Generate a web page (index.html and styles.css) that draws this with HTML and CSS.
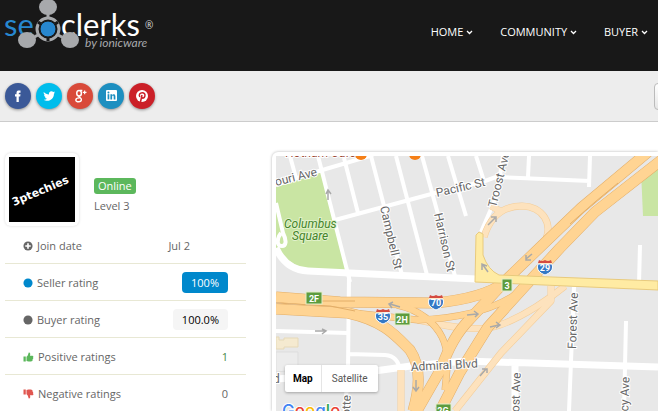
FILE: index.html
```html
<!DOCTYPE html>
<html lang="en">
<head>
  <meta charset="UTF-8" />
  <meta name="viewport" content="width=device-width, initial-scale=1.0"/>
  <title>3ptechies - SEOClerks</title>
  <link rel="stylesheet" href="styles.css">
</head>
<body>

  <!-- Header -->
  <header>
    <a class="logo" href="#" aria-label="SEOClerks by ionicware">
      <svg width="156" height="52" viewBox="0 0 156 52">
        <g class="logo-word">
          <text class="logo-blue" x="4" y="36">se</text>
          <text x="61" y="36">clerks</text>
        </g>
        <text class="logo-reg" x="145" y="29">®</text>
        <text class="logo-by" x="85" y="47">by ionicware</text>
        <circle cx="48" cy="29" r="13" fill="#181818"/>
        <g stroke="#a7a9ac" stroke-width="3" fill="none">
          <circle cx="48" cy="29" r="11"/>
          <path d="M48 8V19M38 35L27 41M58 35L70 41"/>
        </g>
        <g stroke="#181818" stroke-width="3"><path d="M48 29L38 22M48 29L58 22M48 29V41"/></g>
        <g fill="#a7a9ac">
          <ellipse cx="48" cy="7" rx="9" ry="8"/>
          <ellipse cx="27" cy="40" rx="9" ry="8"/>
          <ellipse cx="70" cy="40" rx="9" ry="8"/>
        </g>
        <circle cx="48" cy="29" r="8" fill="#2787cf" stroke="#181818"/>
      </svg>
    </a>
    <nav>
      <a href="#">HOME <svg class="chevron" viewBox="0 0 7 5"><path d="M1 1L3.500 3.500L6 1"/></svg></a>
      <a href="#">COMMUNITY <svg class="chevron" viewBox="0 0 7 5"><path d="M1 1L3.500 3.500L6 1"/></svg></a>
      <a href="#">BUYER <svg class="chevron" viewBox="0 0 7 5"><path d="M1 1L3.500 3.500L6 1"/></svg></a>
    </nav>
  </header>

  <!-- Social bar -->
  <div class="social-bar">
    <a class="social facebook" href="#" aria-label="Facebook">
      <svg viewBox="0 0 26 26"><path d="M11.500 19V13.500H10V11.300H11.500V10C11.500 8 12.500 7.500 14 7.500H15.500V9.700H14.500C13.900 9.700 13.800 10 13.800 10.500V11.300H15.500L15.200 13.500H13.800V19Z"/></svg>
    </a>
    <a class="social twitter" href="#" aria-label="Twitter">
      <svg viewBox="-2 -2 30 30"><path d="M7 8.500C8.500 10.300 10.500 11.300 13 11.400C12.500 9 14 7.500 15.800 7.500C16.700 7.500 17.400 7.900 17.900 8.400L19.700 7.800L18.700 9.300L20 9L18.700 10.400C18.800 15 15.300 18.500 11.200 18.500C9.500 18.500 8 18 7 17.300C8.500 17.400 9.800 17 10.700 16.200C9.400 16 8.600 15.400 8.300 14.400H9.400C8 13.900 7.300 13 7.300 11.700L8.300 12C7 11 6.600 9.800 7 8.500Z"/></svg>
    </a>
    <a class="social google" href="#" aria-label="Google Plus">
      <svg viewBox="-1 -1 28 28"><g fill="none" stroke="#fff"><ellipse cx="12" cy="10" rx="2.500" ry="3" stroke-width="1.600"/><path d="M13 7H15.500M11.500 13C12 15 14.500 14.700 14.500 16.800C14.500 20 8.500 20 8.500 17.200C8.500 15.300 11 15 12.500 15" stroke-width="1.500"/><path d="M18 7V11M16 9H20" stroke-width="1.300"/></g></svg>
    </a>
    <a class="social linkedin" href="#" aria-label="LinkedIn">
      <svg viewBox="0 0 26 26"><rect x="8" y="7" width="11" height="11" rx="1"/><g fill="#1d8fc0"><rect x="9.600" y="11.200" width="1.700" height="5.200"/><circle cx="10.450" cy="9.500" r="1"/><path d="M12.400 11.200H14V12C15 10.600 17.400 10.800 17.400 13.200V16.400H15.700V13.600C15.700 12.200 14.100 12.200 14.100 13.600V16.400H12.400Z"/></g></svg>
    </a>
    <a class="social pinterest" href="#" aria-label="Pinterest">
      <svg viewBox="0 0 26 26"><circle cx="13" cy="13" r="6"/><path d="M11.500 19L13 12M10.800 14C9.500 11.500 11 9.700 13.200 9.700C15.400 9.700 16.300 11.200 15.900 13C15.400 15.300 13.300 15.700 12.700 14.300" fill="none" stroke="#cb2028" stroke-width="1.500"/></svg>
    </a>
    <button class="bar-button" type="button" aria-label="Search"></button>
  </div>

  <!-- Profile -->
  <main>
    <section class="profile">
      <div class="user">
        <div class="avatar">
          <svg width="66" height="65" viewBox="0 0 66 65"><rect width="66" height="65"/><text class="avatar-name" x="5" y="49" transform="rotate(-23 5 49)">3ptechies</text></svg>
        </div>
        <div class="status">
          <span class="online">Online</span>
          <span>Level 3</span>
        </div>
      </div>

      <table class="stats">
        <tr>
          <th scope="row"><svg class="icon" viewBox="0 0 11 11"><circle cx="5.500" cy="5.500" r="5" fill="#666"/><path d="M5.500 2.500V8.500M2.500 5.500H8.500" stroke="#fff" stroke-width="1.800"/></svg>Join date</th>
          <td class="date">Jul 2</td>
        </tr>
        <tr>
          <th scope="row"><svg class="icon" viewBox="0 0 11 11"><circle cx="5.500" cy="5.500" r="5" fill="#08c"/></svg>Seller rating</th>
          <td><span class="badge seller">100%</span></td>
        </tr>
        <tr>
          <th scope="row"><svg class="icon" viewBox="0 0 11 11"><circle cx="5.500" cy="5.500" r="5" fill="#666"/></svg>Buyer rating</th>
          <td><span class="badge buyer">100.0%</span></td>
        </tr>
        <tr>
          <th scope="row"><svg class="icon thumb" viewBox="0 0 11 11"><path d="M0 5H2.500V10.500H0ZM3.300 5.200C5 4.200 5 2.500 5.800 0.500C7.500 0.300 7.800 2 7.100 4H10C11.200 4.400 11 5.500 10.500 6C11 7 10.600 7.700 10 8C10.300 9.500 9.500 10.500 8 10.500H5.500L3.300 10Z" fill="#5bb75b"/></svg>Positive ratings</th>
          <td class="positive">1</td>
        </tr>
        <tr>
          <th scope="row"><svg class="icon thumb" viewBox="0 0 11 11"><path transform="matrix(1 0 0 -1 0 11)" d="M0 5H2.500V10.500H0ZM3.300 5.200C5 4.200 5 2.500 5.800 0.500C7.500 0.300 7.800 2 7.100 4H10C11.200 4.400 11 5.500 10.500 6C11 7 10.600 7.700 10 8C10.300 9.500 9.500 10.500 8 10.500H5.500L3.300 10Z" fill="#e05650"/></svg>Negative ratings</th>
          <td>0</td>
        </tr>
      </table>
    </section>

    <!-- Map -->
    <section class="map">
      <svg class="map-canvas" viewBox="276 156 382 255" preserveAspectRatio="xMinYMin slice">
        <rect class="land" x="276" y="156" width="382" height="255"/>
        <path class="park" d="M276 187L321 172L347 271L306 271L286 259L276 248Z"/>
        <path class="park" d="M641 171L662 156V216H643Z"/>
        <path d="M276 337H279V340H284V338H298V347H284V349H276Z" fill="#f5ead0" stroke="#e6d9b8"/>
        <path d="M276 352L298 352V370L276 372Z" fill="#ececec" stroke="#ddd"/>

        <!-- streets -->
        <g class="street">
          <path d="M276 185L319 171L373 155M290 156L296 178M318 156L350 282M344 158L358 213"/>
          <path d="M371 156L402 275M396 156L427 275M422 156L455 276M448 156L466 216"/>
          <path d="M335 220L435 193L485 181L496 177L590 181M476 156L484 181M529 156L528 177M590 156L589 187"/>
          <path d="M276 203L283 233C287 241 286 246 282 246C276 246 277 238 281 233"/>
          <path d="M349 275L348 370L345 411M276 331L348 333M348 354L385 355Q399 356 400 372"/>
          <path d="M574 287L569 411M626 321L624 411M640 245L639 284"/>
          <path d="M503 156L497 195L481 232"/>
        </g>
        <g class="avenue">
          <path d="M276 248Q286 270 308 271L476 279"/>
          <path d="M276 379L360 373L411 366L465 361L658 367M515 365V411"/>
        </g>

        <!-- ramps -->
        <g class="ramp-edge">
          <path d="M484 237C492 210 510 206 522 206C544 207 552 224 546 239C542 252 522 263 508 278M491 206L502 212"/>
          <path d="M418 320C455 328 480 332 500 325C525 316 545 302 565 286"/>
          <path d="M455 411L501 353L551 301V286M401 370V411"/>
        </g>
        <g class="ramp">
          <path d="M484 237C492 210 510 206 522 206C544 207 552 224 546 239C542 252 522 263 508 278M491 206L502 212"/>
          <path d="M418 320C455 328 480 332 500 325C525 316 545 302 565 286"/>
          <path d="M455 411L501 353L551 301V286M401 370V411"/>
        </g>

        <!-- highways -->
        <g class="highway-edge">
          <path d="M648 152L581 208L508 278L470 319Q452 337 441 369L414 416"/>
          <path d="M664 158L595 212L560 248L526 285L488 327L460 372L440 411"/>
          <path d="M276 297L340 302L435 303C465 300 490 294 505 282"/>
          <path d="M276 309L348 313C385 321 397 337 410 350C422 368 419 390 413 411"/>
        </g>
        <g class="link-edge">
          <path d="M354 313L418 320C470 318 505 306 528 285"/>
          <path d="M397 305C420 310 435 323 442 337C450 353 447 369 445 390"/>
        </g>
        <g class="highway">
          <path d="M648 152L581 208L508 278L470 319Q452 337 441 369L414 416"/>
          <path d="M664 158L595 212L560 248L526 285L488 327L460 372L440 411"/>
          <path d="M276 297L340 302L435 303C465 300 490 294 505 282"/>
          <path d="M276 309L348 313C385 321 397 337 410 350C422 368 419 390 413 411"/>
        </g>
        <g class="link">
          <path d="M354 313L418 320C470 318 505 306 528 285"/>
          <path d="M397 305C420 310 435 323 442 337C450 353 447 369 445 390"/>
        </g>
        <path class="lane" d="M316 301L355 301M618 183L595 202L570 224M276 303L330 306L355 311"/>

        <!-- main road -->
        <path class="main-road" d="M476 235L479 232L483 234V255Q488 270 499 275L658 281V290L475 282Z"/>

        <!-- direction arrows -->
        <g class="arrow">
          <path d="M328 200V191M326 194L328 190L331 194"/>
          <path d="M488 225L495 218M491 217L496 217L496 222"/>
          <path d="M532 254L526 259M526 255V260H531"/>
          <path d="M488 272L483 265M482 270V264L487 266"/>
          <path d="M315 331H325M322 329L326 331L322 334"/>
          <path d="M400 307L390 304M393 302L389 304L392 308"/>
          <path d="M416 380V390M413 387L416 391L419 387"/>
          <path d="M467 315L477 314M474 311L478 314L475 317"/>
          <path d="M490 327L499 325M496 322L500 325L496 328"/>
          <path d="M480 376L486 369M482 369H487V373"/>
        </g>

        <!-- street names -->
        <g class="label">
          <text x="276" y="186" transform="rotate(-14 276 186)">ouri Ave</text>
          <text x="437" y="197" transform="rotate(-13 437 197)">Pacific St</text>
          <text x="380" y="207" transform="rotate(77 380 207)">Campbell St</text>
          <text x="434" y="214" transform="rotate(77 434 214)">Harrison St</text>
          <text x="496" y="208" transform="rotate(-76 496 208)">Troost Ave</text>
          <text x="411" y="371" transform="rotate(-3 411 371)">Admiral Blvd</text>
          <text x="576" y="349" transform="rotate(-88 576 349)">Forest Ave</text>
          <text x="519" y="419" transform="rotate(-88 519 419)">oost Ave</text>
          <text x="628" y="418" transform="rotate(-88 628 418)">acy Ave</text>
          <text x="350" y="419" transform="rotate(-88 350 419)">lotte St</text>
          <text x="273" y="383">d</text>
        </g>
        <g class="label park-label">
          <text x="284" y="228">Columbus</text>
          <text x="292" y="240">Square</text>
        </g>
        <text class="label food" x="285" y="157">Hotham Café</text>
        <circle cx="361" cy="154" r="6" fill="#f57f17"/>
        <circle cx="415" cy="154" r="6" fill="#f57f17"/>

        <!-- exit signs -->
        <g class="exit">
          <rect x="306" y="292" width="16" height="12"/><text x="314" y="302">2F</text>
          <rect x="395" y="313" width="15" height="12"/><text x="402" y="323">2H</text>
          <rect x="502" y="279" width="10" height="12"/><text x="507" y="289">3</text>
          <rect x="436" y="404" width="15" height="12"/><text x="443" y="414">2G</text>
        </g>

        <!-- interstate shields -->
        <defs>
          <g id="shield">
            <path d="M-7 -3H7C9 3 5 6 0 8C-5 6 -9 3 -7 -3Z" fill="#3478c5" stroke="#fff" stroke-width="1"/>
            <path d="M-6 -7Q-3 -5 0 -7Q3 -5 6 -7L7 -4H-7Z" fill="#d44b40"/>
          </g>
        </defs>
        <g class="shield">
          <use href="#shield" x="545" y="267"/><text x="545" y="271">29</text>
          <use href="#shield" x="436" y="302"/><text x="436" y="306">70</text>
          <use href="#shield" x="383" y="316"/><text x="383" y="320">35</text>
        </g>

        <text class="google-mark" x="282" y="417"><tspan fill="#4285f4">G</tspan><tspan fill="#ea4335">o</tspan><tspan fill="#fbbc05">o</tspan><tspan fill="#4285f4">g</tspan><tspan fill="#34a853">l</tspan><tspan fill="#ea4335">e</tspan></text>
      </svg>

      <div class="map-type">
        <button class="active" type="button">Map</button>
        <button type="button">Satellite</button>
      </div>
    </section>
  </main>

</body>
</html>
```

FILE: styles.css
```css
* {
  box-sizing: border-box;
}

body {
  margin: 0;
  height: 100vh;
  display: flex;
  flex-direction: column;
  overflow: hidden;
  font-family: "Open Sans", sans-serif;
  font-size: 11px;
  background-color: #fff;
  color: #666;
}

/* Header */
header {
  flex: none;
  height: 71px;
  display: flex;
  justify-content: space-between;
  background-color: #181818;
}

.logo svg {
  display: block;
}

.logo-word {
  font-family: Lato, sans-serif;
  font-size: 31px;
  fill: #fff;
}

.logo-word .logo-blue {
  fill: #2787cf;
}

.logo-reg {
  font-size: 10px;
  fill: #ddd;
}

.logo-by {
  font-family: Lato, sans-serif;
  font-size: 12px;
  font-style: italic;
  fill: #a7a9ac;
}

nav {
  display: flex;
  gap: 27px;
  padding: 23px 10px 0 0;
}

nav a {
  color: #fff;
  line-height: 18px;
  text-decoration: none;
  white-space: nowrap;
}

.chevron {
  width: 7px;
  height: 5px;
  margin-bottom: 1px;
  fill: none;
  stroke: #fff;
  stroke-width: 1.3;
}

/* Social bar */
.social-bar {
  flex: none;
  height: 51px;
  display: flex;
  align-items: center;
  gap: 5px;
  padding-left: 5px;
  background-color: #ededed;
  border-bottom: 1px solid #ccc;
}

.social {
  width: 26px;
  height: 26px;
  border-radius: 50%;
  box-shadow: 0 1px 3px rgba(0,0,0,0.4);
}

.social svg {
  display: block;
  fill: #fff;
}

.facebook {
  background-color: #3b5998;
}

.twitter {
  background-color: #00bdec;
}

.google {
  background-color: #d94a3a;
}

.linkedin {
  background-color: #1d8fc0;
}

.pinterest {
  background-color: #cb2028;
}

.bar-button {
  width: 34px;
  height: 27px;
  margin-left: auto;
  margin-right: -30px;
  border: 1px solid #bbb;
  border-radius: 4px;
  background: linear-gradient(#fff, #e6e6e6);
}

/* Profile */
main {
  flex: 1;
  min-height: 0;
  display: flex;
  gap: 26px;
  padding: 31px 0 0 5px;
}

.profile {
  flex: none;
  width: 241px;
}

.user {
  display: flex;
  gap: 15px;
}

.avatar {
  padding: 4px;
  border-radius: 6px;
  box-shadow: 0 0 3px rgba(0,0,0,0.15);
}

.avatar svg {
  display: block;
}

.avatar-name {
  font-family: "DejaVu Sans", sans-serif;
  font-size: 11px;
  font-weight: bold;
  fill: #fff;
}

.status {
  display: flex;
  flex-direction: column;
  align-items: flex-start;
  gap: 4px;
  padding-top: 25px;
  line-height: 16px;
}

.online {
  padding: 0 4px;
  border-radius: 3px;
  background-color: #5cb85c;
  color: #fff;
}

.stats {
  width: 100%;
  border-collapse: collapse;
}

.stats th,
.stats td {
  height: 37px;
  padding: 2px 18px 0;
  border-bottom: 1px solid #e8e8d4;
  font-weight: normal;
  text-align: left;
  white-space: nowrap;
}

.stats th {
  padding-right: 0;
}

.stats td {
  text-align: right;
}

.stats .date {
  padding-right: 56px;
}

.stats .positive {
  color: #468847;
}

.icon {
  width: 10px;
  height: 10px;
  margin-right: 4px;
  vertical-align: -1px;
}

.thumb {
  width: 11px;
}

.badge {
  display: inline-block;
  padding: 0 9px;
  border-radius: 4px;
  line-height: 21px;
}

.badge.seller {
  background-color: #08c;
  color: #fff;
}

.badge.buyer {
  background-color: #f5f5f5;
  color: #000;
}

/* Map */
.map {
  flex: 1;
  min-width: 0;
  position: relative;
  margin-top: -1px;
  padding: 4px 0 0 4px;
  border-radius: 6px 0 0 0;
  box-shadow: 0 0 3px rgba(0,0,0,0.3);
}

.map-canvas {
  display: block;
  width: 100%;
  height: 100%;
}

.land {
  fill: #e8e8e8;
}

.park {
  fill: #c9e5a3;
}

.street,
.avenue,
.ramp,
.ramp-edge,
.highway,
.highway-edge,
.link,
.link-edge,
.lane {
  fill: none;
  stroke: #fff;
  stroke-width: 4;
  stroke-linejoin: round;
}

.avenue {
  stroke-width: 7;
}

.ramp-edge {
  stroke: #f3cd99;
  stroke-width: 7;
}

.ramp {
  stroke: #fde2bd;
  stroke-width: 6;
}

.highway-edge {
  stroke: #e3ae68;
  stroke-width: 11;
}

.highway {
  stroke: #ffd493;
  stroke-width: 10;
}

.link-edge {
  stroke: #e3ae68;
  stroke-width: 7;
}

.link {
  stroke: #ffd493;
  stroke-width: 6;
}

.lane {
  stroke: #e3ae68;
  stroke-width: 1;
}

.main-road {
  fill: #ffeba3;
  stroke: #e8ca7d;
}

.arrow {
  fill: none;
  stroke: #a9a9a9;
  stroke-width: 1.5;
}

.label {
  font-family: Roboto, sans-serif;
  font-size: 12px;
  fill: #666;
  stroke: #fff;
  stroke-width: 2;
  paint-order: stroke;
}

.park-label {
  font-style: italic;
  fill: #45842a;
  stroke: #e1f1cb;
}

.food {
  fill: #9c4a35;
}

.exit,
.shield {
  font-family: Roboto, sans-serif;
  font-size: 9px;
  font-weight: bold;
  text-anchor: middle;
  fill: #fff;
}

.exit rect {
  fill: #5d9c3e;
  stroke: #e4edc9;
}

.google-mark {
  font-family: Inter, sans-serif;
  font-size: 17px;
  font-weight: 500;
  stroke: #fff;
  stroke-width: 2;
  paint-order: stroke;
}

.map-type {
  position: absolute;
  left: 13px;
  bottom: 19px;
  display: flex;
  border-radius: 2px;
  background-color: #fff;
  box-shadow: 0 1px 3px rgba(0,0,0,0.3);
}

.map-type button {
  padding: 0 10px;
  border: none;
  background: none;
  font-family: Roboto, sans-serif;
  font-size: 10px;
  line-height: 27px;
  color: #565656;
}

.map-type .active {
  padding: 0 8px;
  border-right: 1px solid #e5e5e5;
  font-weight: bold;
  color: #000;
}
```
